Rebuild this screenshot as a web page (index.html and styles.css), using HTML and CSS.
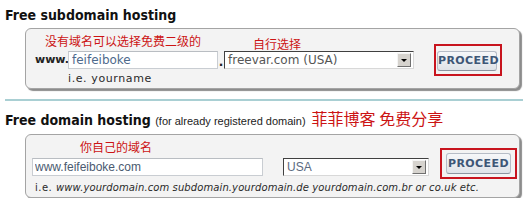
FILE: index.html
```html
<!DOCTYPE html>
<html>
<head>
<meta charset="utf-8">
<link rel="stylesheet" href="styles.css">
</head>
<body>
<h2 class="title">Free subdomain hosting</h2>
<div class="box box-sub">
  <div class="hint hint-a">没有域名可以选择免费二级的</div>
  <div class="hint hint-b">自行选择</div>
  <div class="www">www.</div>
  <input class="field field-sub" type="text" value="feifeiboke">
  <div class="dot">.</div>
  <div class="select select-sub"><span class="select-text">freevar.com (USA)</span><span class="arrow"></span></div>
  <div class="btn-wrap btn-wrap-sub"><button class="btn btn-sub">PROCEED</button></div>
  <div class="ie ie-sub">i.e. yourname</div>
</div>
<div class="sep"></div>
<h2 class="title">Free domain hosting <span class="note">(for already registered domain)</span><span class="promo">菲菲博客 免费分享</span></h2>
<div class="box box-dom">
  <div class="hint hint-c">你自己的域名</div>
  <input class="field field-dom" type="text" value="www.feifeiboke.com">
  <div class="select select-dom"><span class="select-text">USA</span><span class="arrow"></span></div>
  <div class="btn-wrap btn-wrap-dom"><button class="btn btn-dom">PROCEED</button></div>
  <div class="ie ie-dom">i.e. <em>www.yourdomain.com subdomain.yourdomain.de yourdomain.com.br or co.uk etc.</em></div>
</div>
</body>
</html>
```
FILE: styles.css
```css
html, body {
  margin: 0;
  padding: 0;
  background: #ffffff;
}
body {
  font-family: "DejaVu Sans", Verdana, sans-serif;
  color: #111;
  padding-top: 6px;
}
.title {
  margin: 0 0 0 5px;
  font-family: "DejaVu Sans Condensed", "DejaVu Sans", sans-serif;
  font-size: 14px;
  line-height: 18px;
  font-weight: bold;
  color: #111;
  white-space: nowrap;
}
.note {
  font-family: "Liberation Sans", Arial, sans-serif;
  font-weight: normal;
  font-size: 11px;
  color: #222;
}
.promo {
  font-family: "Noto Sans CJK SC", sans-serif;
  font-weight: normal;
  font-size: 16px;
  color: #cc1414;
  margin-left: 6px;
}
.box {
  box-sizing: border-box;
  margin: 4px 0 0 25px;
  width: 495px;
  background: #f3f3f3;
  border: 1px solid #a4a4a4;
  border-radius: 6px;
  box-shadow: 2px 2px 1px #8c8c8c;
  display: grid;
}
.box-sub {
  padding: 3px 0 1px 9px;
  grid-template-columns: 33px 150px 6px 190px 20px 68px;
  grid-template-rows: 17px 18px 16px;
  row-gap: 2px;
}
.box-dom {
  padding: 3px 0 1px 6px;
  grid-template-columns: 231px 20px 146px 11px 77px;
  grid-template-rows: 17px 18px 17px;
  row-gap: 3px;
}
.hint {
  font-family: "Noto Sans CJK SC", sans-serif;
  font-size: 12px;
  line-height: 17px;
  color: #cc1414;
  white-space: nowrap;
}
.hint-a { grid-column: 1 / 4; grid-row: 1; padding-left: 10px; }
.hint-b { grid-column: 4; grid-row: 1; padding-left: 29px; position: relative; top: 3px; }
.hint-c { grid-column: 1 / 4; grid-row: 1; padding-left: 48px; }
.www {
  grid-column: 1; grid-row: 2;
  font-size: 11px;
  font-weight: bold;
  line-height: 18px;
  color: #222;
  white-space: nowrap;
}
.field {
  box-sizing: border-box;
  margin: 0;
  height: 18px;
  border: 1px solid #c9cdd2;
  border-top-color: #b9bdc2;
  background: #fff;
  padding: 0 3px;
  outline: none;
}
.field-sub {
  grid-column: 2; grid-row: 2;
  width: 150px;
  font-family: "DejaVu Sans", Verdana, sans-serif;
  font-size: 12px;
  color: #4e6a8c;
}
.field-dom {
  grid-column: 1; grid-row: 2;
  width: 231px;
  font-family: "Liberation Sans", Arial, sans-serif;
  font-size: 12px;
  color: #4a5a70;
  padding-left: 2px;
}
.dot {
  grid-column: 3; grid-row: 2;
  font-weight: bold;
  font-size: 12px;
  line-height: 22px;
  text-align: center;
  color: #222;
}
.select {
  box-sizing: border-box;
  height: 18px;
  background: #fff;
  border-top: 1px solid #404040;
  border-left: 1px solid #404040;
  border-right: 1px solid #d8d8d8;
  border-bottom: 1px solid #d8d8d8;
  display: flex;
  align-items: center;
  justify-content: space-between;
  padding: 0 1px 0 3px;
}
.select-sub {
  grid-column: 4; grid-row: 2;
  font-family: "DejaVu Sans", Verdana, sans-serif;
  font-size: 12px;
  color: #555;
}
.select-dom {
  grid-column: 3; grid-row: 2;
  font-family: "Liberation Sans", Arial, sans-serif;
  font-size: 12px;
  color: #5a6a80;
}
.select-text {
  white-space: nowrap;
  line-height: 16px;
}
.arrow {
  box-sizing: border-box;
  width: 14px;
  height: 14px;
  background: #d6d3ce;
  border-top: 1px solid #f4f4f4;
  border-left: 1px solid #f4f4f4;
  border-right: 1px solid #707070;
  border-bottom: 1px solid #707070;
  position: relative;
  margin-right: 1px;
}
.arrow::after {
  content: "";
  position: absolute;
  left: 3px;
  top: 5px;
  border-left: 3px solid transparent;
  border-right: 3px solid transparent;
  border-top: 3px solid #000;
}
.btn-wrap {
  box-sizing: border-box;
  border: 2px solid #c8141e;
  display: flex;
}
.btn-wrap-sub {
  grid-column: 6; grid-row: 1 / 4;
  align-self: center;
  width: 68px;
  height: 32px;
  padding: 5px 3px 3px 1px;
}
.btn-wrap-dom {
  grid-column: 5; grid-row: 1 / 4;
  align-self: start;
  margin-top: 10px;
  width: 77px;
  height: 31px;
  padding: 3px 4px 3px 4px;
}
.btn {
  box-sizing: border-box;
  margin: 0;
  width: 100%;
  height: 100%;
  padding: 0;
  font-family: "DejaVu Sans", Verdana, sans-serif;
  font-size: 11px;
  font-weight: bold;
  letter-spacing: 0.4px;
  color: #3d5676;
  background: linear-gradient(#f6f7f9, #dfe3e8);
  border: 1px solid #b6bcc6;
  border-bottom-color: #8c94a0;
  border-radius: 3px;
}
.ie {
  font-size: 11px;
  line-height: 16px;
  color: #2a2a2a;
  letter-spacing: 0.6px;
  white-space: nowrap;
}
.ie-sub { grid-column: 2 / 5; grid-row: 3; }
.ie-dom {
  grid-column: 1 / 6; grid-row: 3;
  padding-left: 3px;
  font-size: 10px;
  line-height: 17px;
  letter-spacing: 0.5px;
}
.ie-dom em {
  font-style: italic;
  letter-spacing: 0.1px;
}
.sep {
  margin: 10px 0 0 5px;
  height: 2px;
  background: #a9cfd3;
}
.sep + .title { margin-top: 8px; }
```
